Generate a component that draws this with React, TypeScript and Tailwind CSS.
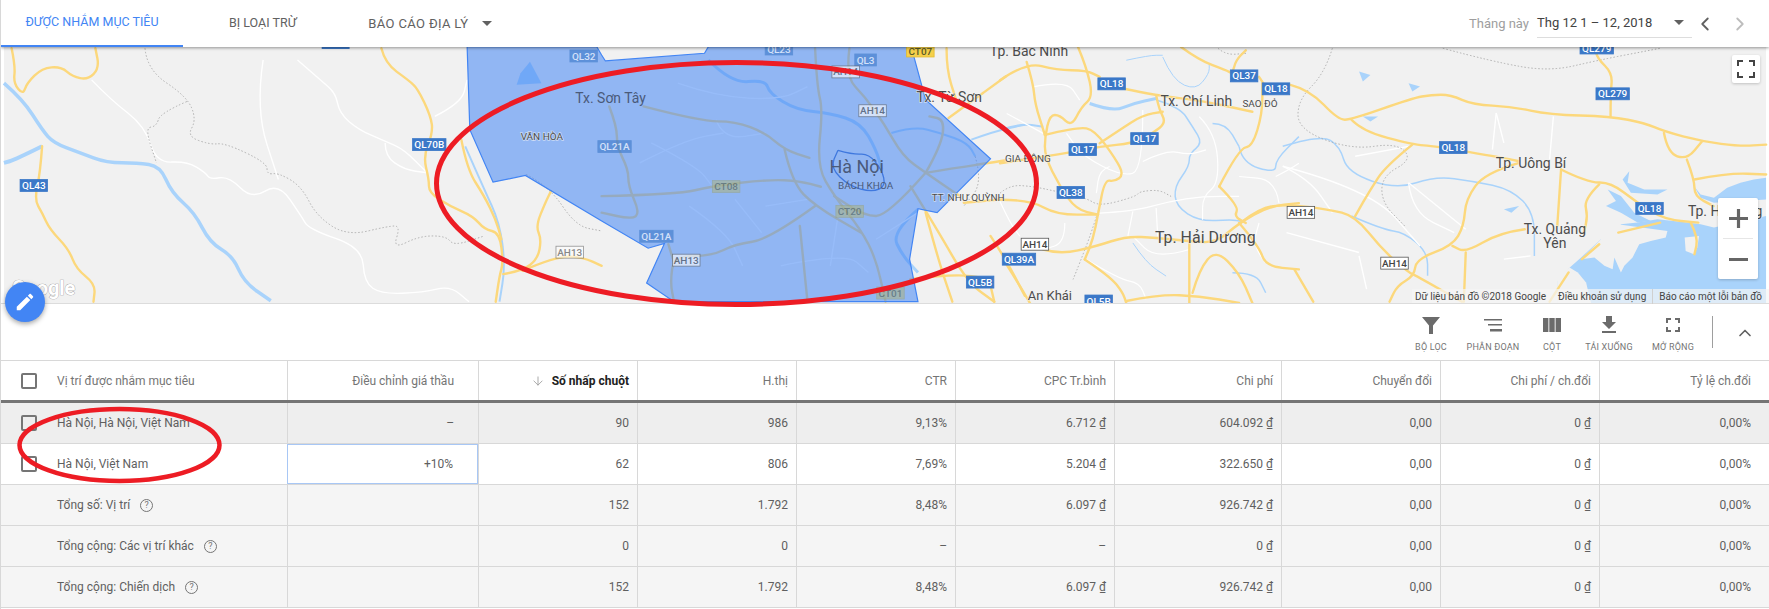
import { ArrowDown, ChevronLeft, ChevronRight, ChevronUp } from 'lucide-react'

// the map traces are read off crops of the map, so each crop has its own offset and scale
const parse = (ox: number, oy: number, sx: number, sy: number, raw: string) =>
    raw.trim().split(/\s+/).map((s) => {
        const [x, y] = s.split(',').map(Number)
        return [x / sx + ox, y / sy + oy]
    })

const curve = (p: number[][]) => {
    let d = `M${p[0][0].toFixed(1)} ${p[0][1].toFixed(1)}`
    for (let i = 1; i < p.length - 1; i++) {
        const mx = (p[i][0] + p[i + 1][0]) / 2
        const my = (p[i][1] + p[i + 1][1]) / 2
        d += `Q${p[i][0].toFixed(1)} ${p[i][1].toFixed(1)} ${mx.toFixed(1)} ${my.toFixed(1)}`
    }
    const l = p[p.length - 1]
    return d + `L${l[0].toFixed(1)} ${l[1].toFixed(1)}`
}

const smooth = (off: number, raw: string) => curve(parse(off, 0, 2.613, 3, raw))
const middle = (raw: string) => curve(parse(1000, 47, 3, 3, raw))
const join = (p: number[][]) => p.map(([x, y]) => `${x.toFixed(1)},${y.toFixed(1)}`).join(' ')
const poly = (off: number, raw: string) => join(parse(off, 0, 2.613, 3, raw))
const bay = (raw: string) => join(parse(1560, 170, 3, 3, raw))

const yellow: [number, string][] = [
    [0, '20,145 30,200 25,250 50,285 60,250 100,205 150,200 180,230 220,240 250,205 240,145'],
    [0, '100,440 95,520 80,600 100,640 120,690 170,750 190,810 240,855 235,908'],
    [0, '990,145 1000,190 1060,240 1085,265 1120,350 1125,400 1100,470 1115,540 1115,580 1170,620 1230,650 1260,690 1300,700 1310,790 1300,830 1290,908'],
    [0, '1310,825 1360,815 1400,780 1410,720 1395,680 1420,610 1435,575'],
    [0, '1200,420 1215,510 1260,590 1290,660 1305,720'],
    [0, '1360,815 1450,770 1520,775 1568,800'],
    [600, '560,145 565,260 580,330 565,500 610,590 680,690 720,780 745,908'],
    [600, '650,145 640,230 690,290 740,370 790,470 850,520 940,590'],
    [600, '110,320 260,365 350,365 430,400 480,450 545,475'],
    [600, '480,450 500,550 560,620 680,700'],
    [600, '0,590 200,585 290,560 440,540 520,545 575,562'],
    [600, '20,320 40,380 40,440 70,510 70,560 100,640 80,660 0,640'],
    [600, '850,520 750,650 690,650 610,590'],
    [600, '850,520 890,440 900,360 860,350'],
    [600, '560,620 440,720 350,735 290,770 190,770 180,850 190,908'],
    [600, '175,735 190,790'],
    [600, '520,680 530,790 540,908'],
    [600, '850,520 930,505 1020,490 1060,482'],
    [600, '810,560 880,690 960,850 1030,908'],
    [600, '850,640 880,770 920,908'],
    [600, '950,610 1050,600'],
    [600, '1020,710 1060,780 1110,890'],
    [600, '810,840 1010,810 1030,908'],
    [600, '905,145 905,210 930,300'],
    [600, '1000,280 1060,230'],
    [600, '910,355 1000,280'],
    [1169, '320,255 370,270 445,360 480,360 640,295 690,285 740,285 800,315 900,320 1000,345 1160,350 1250,370 1300,395 1400,425 1500,440 1568,435'],
    [1169, '480,360 510,395 640,435 700,440 880,475 920,485'],
    [1169, '640,435 570,500 530,570 490,650'],
    [1169, '190,670 240,625 310,615 420,630 490,650 560,750 630,820 650,830 770,908'],
    [1169, '920,490 830,520 780,600 775,680 745,740 650,780 645,830 600,860 580,908'],
    [1169, '1030,510 1020,680'],
    [1169, '1030,510 1100,550 1160,548 1230,610 1300,660 1390,670'],
    [1169, '1130,555 1090,600 1100,650 1090,700'],
    [1169, '935,690 870,700 780,760 745,740'],
    [1169, '780,760 775,908'],
    [1169, '1160,350 1160,280 1165,220 1125,175 1120,145'],
    [1169, '1300,400 1310,460 1360,480 1400,425'],
    [1169, '1360,480 1380,540 1380,590 1430,620'],
    [1169, '1380,540 1470,520 1568,525'],
    [1169, '1370,670 1390,715 1380,765'],
    [1169, '330,810 380,908'],
    [1169, '1000,908 1050,820'],
    [1169, '1085,780 1130,735'],
    [1169, '1180,700 1290,670'],
]

const yellowMiddle = [
    '235,0 260,60 280,150 245,180 215,240 180,205 150,205 135,270 135,330 180,420 230,490 295,505',
    '0,100 80,45 170,70 260,70 300,90',
    '80,45 100,110 105,170 135,265',
    '135,265 235,240 285,250 350,340 372,385 345,405 315,400 295,505 280,580 255,640',
    '0,350 130,330 210,318 300,300 400,290 460,260 500,228 480,190 470,145',
    '300,290 360,250 430,205 490,195',
    '370,125 480,148 600,160 760,195',
    '0,460 90,460 170,505 295,505',
    '130,610 180,625 290,600 380,570 470,575 570,585 650,590 720,530 810,480 900,470',
    '255,640 330,690 370,740 380,771',
    '10,640 60,720 90,771',
    '380,765 480,745 600,750 720,771',
    '570,585 570,771',
    '580,740 600,670 650,610 720,680 760,771',
    '660,420 720,305 760,300 790,200 790,110',
    '660,420 720,480 705,510 740,530',
    '720,530 780,600 800,660 900,670',
    '545,0 600,40 680,70 700,80 710,40 740,10',
    '780,90 800,120',
]

const white: [number, string][] = [
    [0, '230,240 280,300 370,380 400,490 480,485 530,520 540,540 590,530 650,600 720,550 780,650 800,690 940,745 945,850 990,885 1100,880 1170,860 1220,908'],
    [0, '770,180 830,240 870,280 880,340 930,390 1000,425 1050,450 1110,520'],
    [0, '680,180 660,330 720,540'],
    [0, '1000,430 1000,470 1050,510 1110,520'],
    [0, '1130,350 1200,310 1215,240'],
    [600, '200,250 300,290 470,300 540,260'],
    [600, '300,360 320,420 430,400'],
    [600, '130,430 250,500 290,560'],
    [600, '350,600 420,700'],
    [600, '620,650 600,800'],
    [600, '230,620 330,700 370,800'],
    [600, '430,620 540,600'],
    [600, '100,490 220,420 320,400'],
    [600, '720,720 830,640'],
    [600, '470,800 640,760 700,820'],
    [1169, '300,500 530,570 660,740'],
    [1169, '630,550 780,690'],
    [1169, '860,340 850,450'],
    [1169, '1010,350 1000,480'],
    [1169, '490,470 630,440'],
    [1169, '300,500 370,540 430,640'],
    [1169, '630,550 640,640 750,700'],
    [1169, '860,340 880,430'],
    [1169, '310,700 500,760'],
    [1169, '500,770 520,870'],
    [1169, '880,780 950,770'],
]

const whiteMiddle = [
    '100,120 200,100 240,160',
    '130,260 20,200',
    '430,190 430,370 370,390 250,330 200,260',
    '430,345 500,310 570,325 620,310',
    '330,360 300,370 290,440',
    '0,465 30,530 60,570',
    '300,500 400,495 510,465 610,450 720,450',
    '400,495 385,570',
    '470,485 475,570',
    '570,610 470,640 400,570',
    '260,640 360,700 420,710 440,760',
    '600,210 650,260 660,410 610,450 610,520',
    '195,530 195,590 130,610',
    '830,390 870,370 900,350',
    '840,470 830,400 720,390',
    '800,650 760,600 780,530',
]

const water: [number, string, number][] = [
    [0, '0,250 50,300 100,390 130,430 200,460 270,490 350,490 410,500 440,580 500,640 540,730 600,770 630,850 700,905', 3.5],
    [0, '100,440 30,480 0,490', 4],
    [0, '1210,440 1260,570 1300,670 1315,800 1300,908', 2],
    [600, '280,180 340,250 430,240 440,280 510,330 600,340 680,370 720,450 735,510', 3],
    [600, '830,630 760,700 790,770 830,820', 3],
    [600, '760,400 820,380 890,400 960,430 980,470', 2],
    [600, '970,420 1030,395 1110,375', 2],
    [1169, '300,440 400,405 450,440 470,520 600,570 700,530 800,545 900,570 960,640 960,770', 1.5],
    [1169, '480,650 560,690 620,700 680,760 680,830', 1.5],
]

const waterMiddle: [string, number][] = [
    ['270,170 340,195 400,170 470,155', 3],
    ['470,160 540,180 580,240 610,290 570,320 570,360 525,420 530,480 600,525 700,520 725,525', 1.5],
    ['720,300 730,350 830,380 830,340 900,270', 1.5],
    ['640,230 680,230 720,300', 1.5],
    ['490,30 520,100 590,130 630,80 630,50', 1],
    ['380,40 450,25 490,25', 1],
    ['0,250 60,230 130,240', 2],
    ['700,680 770,680 800,740', 1.5],
    ['400,590 440,650 500,690', 1],
]

const seas: [number, string][] = [
    [1169, '500,215 530,225 510,245'],
    [1169, '630,250 660,260 640,275'],
    [1169, '510,350 550,350 530,365'],
    [1169, '880,630 920,620 900,640'],
    [0, '1355,220 1380,185 1410,250 1345,255'],
]

const bayWater = [
    '0,402 0,335 30,300 70,265 130,210 175,205 190,165 240,160 300,150 390,160 430,165 470,175 627,140 627,402',
    '150,60 190,80 230,130 280,155 240,160 190,130 145,110 175,95',
    '195,30 215,5 210,40 260,60 330,60 300,75 220,70',
    '410,50 430,75 470,85 510,55 550,40 590,30 627,25 627,90 470,100 430,85',
]

const bayLand = [
    '0,320 35,295 60,310 85,340 100,402 0,402',
    '130,210 180,165 330,185 325,205 280,215 245,225 225,265 200,290 190,310 170,265 165,300 140,290 110,265 70,270',
    '382,205 425,200 420,235 410,255 385,245',
]

const borders: [number, string][] = [
    [0, '370,145 375,210 480,290 505,360 480,410 540,435 580,430 690,490 690,525 720,520 780,560 820,650 900,710 1010,680 1040,680 1020,750 1090,710 1160,710 1180,740 1260,710'],
    [0, '480,305 410,340 400,380 370,385 400,490'],
    [0, '1370,525 1430,560 1500,680 1568,695'],
    [600, '980,470 1000,550 950,620'],
    [1169, '130,145 150,165 205,160'],
    [1169, '430,145 410,220 340,300 340,390 480,450 600,430 640,480 560,530 560,610 620,680'],
    [1169, '720,145 850,185 1000,215 1130,180 1290,145'],
]

const bordersMiddle = [
    '0,440 30,415 100,420 170,435 260,455 300,480 410,450 420,435 480,430 515,450',
    '300,480 275,560 240,650 220,700',
]

const shields: [number, number, string, string][] = [
    [427, 145, 'QL70B', 'blue'],
    [30, 186, 'QL43', 'blue'],
    [582, 56, 'QL32', 'blue'],
    [613, 147, 'QL21A', 'blue'],
    [655, 237, 'QL21A', 'blue'],
    [778, 49, 'QL23', 'blue'],
    [865, 60, 'QL3', 'blue'],
    [1112, 84, 'QL18', 'blue'],
    [1083, 150, 'QL17', 'blue'],
    [1145, 139, 'QL17', 'blue'],
    [1071, 193, 'QL38', 'blue'],
    [1019, 260, 'QL39A', 'blue'],
    [980, 283, 'QL5B', 'blue'],
    [1099, 302, 'QL5B', 'blue'],
    [1245, 76, 'QL37', 'blue'],
    [1277, 89, 'QL18', 'blue'],
    [1455, 148, 'QL18', 'blue'],
    [1599, 48, 'QL279', 'blue'],
    [1615, 94, 'QL279', 'blue'],
    [1652, 209, 'QL18', 'blue'],
    [872, 111, 'AH14', 'white'],
    [845, 72, 'AH14', 'white'],
    [685, 261, 'AH13', 'white'],
    [568, 253, 'AH13', 'white'],
    [1035, 245, 'AH14', 'white'],
    [1302, 213, 'AH14', 'white'],
    [1396, 264, 'AH14', 'white'],
    [920, 51, 'CT07', 'yellow'],
    [725, 187, 'CT08', 'green'],
    [849, 212, 'CT20', 'green'],
    [890, 294, 'CT01', 'green'],
]

const places: [number, number, string, number][] = [
    [1029, 51, 'Tp. Bắc Ninh', 14],
    [949, 97, 'Tx. Từ Sơn', 14],
    [609, 98, 'Tx. Sơn Tây', 14],
    [540, 137, 'VĂN HÒA', 10],
    [856, 167, 'Hà Nội', 18],
    [865, 186, 'BÁCH KHOA', 10],
    [1028, 159, 'GIA ĐÔNG', 10],
    [968, 198, 'TT. NHƯ QUỲNH', 10],
    [1197, 101, 'Tx. Chí Linh', 14],
    [1261, 104, 'SAO ĐỎ', 10],
    [1533, 163, 'Tp. Uông Bí', 14],
    [1206, 238, 'Tp. Hải Dương', 16],
    [1557, 230, 'Tx. Quảng', 14],
    [1557, 244, 'Yên', 14],
    [1050, 296, 'An Khái', 13],
    [1728, 212, 'Tp. Hạ Long', 14],
]

const shieldStyle: Record<string, [string, string, string]> = {
    blue: ['#3b78c8', '#3b78c8', '#ffffff'],
    white: ['#ffffff', '#555555', '#444444'],
    yellow: ['#f5d04a', '#e4bb2c', '#5a5a28'],
    green: ['#a9b48a', '#98a37c', '#4d5a45'],
}

function MapDrawing() {
    return (
        <svg viewBox="0 47 1769 257" className="block w-full h-full font-[Roboto,sans-serif]">
            <rect x="0" y="47" width="1769" height="257" fill="#f1f1f1" />
            {bayWater.map((s, i) => <polygon key={i} points={bay(s)} fill="#a9d3fb" />)}
            {bayLand.map((s, i) => <polygon key={i} points={bay(s)} fill="#f1f1f1" />)}
            {seas.map(([o, s], i) => <polygon key={i} points={poly(o, s)} fill="#a9d3fb" />)}
            {water.map(([o, s, w], i) => <path key={i} d={smooth(o, s)} fill="none" stroke="#a9d3fb" strokeWidth={w} strokeLinejoin="round" />)}
            {waterMiddle.map(([s, w], i) => <path key={i} d={middle(s)} fill="none" stroke="#a9d3fb" strokeWidth={w} />)}
            {white.map(([o, s], i) => <path key={i} d={smooth(o, s)} fill="none" stroke="#ffffff" strokeWidth="1.4" />)}
            {whiteMiddle.map((s, i) => <path key={i} d={middle(s)} fill="none" stroke="#ffffff" strokeWidth="1.2" />)}
            {borders.map(([o, s], i) => <path key={i} d={smooth(o, s)} fill="none" stroke="#a8a8a8" strokeWidth="0.9" strokeDasharray="1.5 2" />)}
            {bordersMiddle.map((s, i) => <path key={i} d={middle(s)} fill="none" stroke="#a8a8a8" strokeWidth="0.9" strokeDasharray="1.5 2" />)}
            {yellow.map(([o, s], i) => <path key={i} d={smooth(o, s)} fill="none" stroke="#fcd87c" strokeWidth="2.4" strokeLinejoin="round" strokeLinecap="round" />)}
            {yellowMiddle.map((s, i) => <path key={i} d={middle(s)} fill="none" stroke="#fcd87c" strokeWidth="2.4" strokeLinejoin="round" strokeLinecap="round" />)}
            <rect x="319" y="47" width="28" height="2" fill="#3b78c8" />
            <polygon
                points={[
                    poly(0, '1215,140 1222,390 1283,548 1368,528 1568,665'),
                    poly(600, '122,747 165,733 118,852 190,908 830,908 808,780 830,628 880,640 1020,478 850,300 812,140 280,140 270,160 10,183 0,165'),
                    poly(0, '1555,140'),
                ].join(' ')}
                fill="#4285f4"
                fillOpacity="0.55"
                stroke="#4285f4"
                strokeWidth="1.2"
            />
            <path d={smooth(600, '620,452 660,465 700,462 735,510 745,560 710,578 650,560 600,505 620,452')} fill="none" stroke="#3f78de" strokeWidth="1.3" />
            {shields.map(([x, y, t, k], i) => {
                const [bg, line, ink] = shieldStyle[k]
                const w = t.length * 5.9 + 4
                const over = x > 430 && x < 900 && y < 300
                return (
                    <g key={i} opacity={over ? 0.6 : 1}>
                        <rect x={x - w / 2} y={y - 6} width={w} height="12" fill={bg} stroke={line} strokeWidth="0.8" />
                        <text x={x} y={y + 3.6} textAnchor="middle" fontSize="10" fontWeight="500" fill={ink}>{t}</text>
                    </g>
                )
            })}
            {places.map(([x, y, t, s], i) => {
                const inside = x > 560 && x < 900
                return (
                    <text key={i} x={x} y={y + s * 0.36} textAnchor="middle" fontSize={s} fill={inside ? '#4a5a7a' : '#4c4c4c'} stroke="#f4f4f4" strokeOpacity={inside ? 0 : 0.6} strokeWidth="1.5" paintOrder="stroke">{t}</text>
                )
            })}
            <text x="8" y="296" fontSize="20" fontWeight="700" fill="#ffffff" stroke="#9a9a9a" strokeWidth="0.7" paintOrder="stroke">Google</text>
        </svg>
    )
}

const Caret = () => (
    <span className="inline-block w-0 h-0 border-x-[5px] border-x-transparent border-t-[5px] border-t-[#616161]" />
)

const HelpIcon = () => (
    <span className="ml-[10px] inline-flex items-center justify-center w-[13px] h-[13px] rounded-full border border-[#757575] text-[9px] leading-none text-[#757575]">?</span>
)

const Check = () => (
    <span className="block w-4 h-4 rounded-[2px] border-2 border-[#757575] bg-transparent" />
)

const tools = [
    { label: 'BỘ LỌC', w: 'w-[62px]', d: 'M3 4h18l-7 8.5V21h-4v-8.5L3 4z' },
    { label: 'PHÂN ĐOẠN', w: 'w-[62px]', d: 'M3 6h18v1.4H3zM7 11h14v1.4H7zM9 16h12v2.4H9z' },
    { label: 'CỘT', w: 'w-[56px]', d: 'M3 5h5.4v14H3zM9.3 5h5.4v14H9.3zM15.6 5H21v14h-5.4z' },
    { label: 'TẢI XUỐNG', w: 'w-[58px]', d: 'M19 9h-4V3H9v6H5l7 7 7-7zM5 18v2h14v-2H5z' },
    { label: 'MỞ RỘNG', w: 'w-[70px]', d: 'M7 14H5v5h5v-2H7v-3zm-2-4h2V7h3V5H5v5zm12 7h-3v2h5v-5h-2v3zM14 5v2h3v3h2V5h-5z' },
]

const columns = ['Điều chỉnh giá thầu', 'Số nhấp chuột', 'H.thị', 'CTR', 'CPC Tr.bình', 'Chi phí', 'Chuyển đổi', 'Chi phí / ch.đổi', 'Tỷ lệ ch.đổi']

const rows = [
    { name: 'Hà Nội, Hà Nội, Việt Nam', check: true, help: false, bg: 'bg-[#eeeeee]', cells: ['–', '90', '986', '9,13%', '6.712 ₫', '604.092 ₫', '0,00', '0 ₫', '0,00%'] },
    { name: 'Hà Nội, Việt Nam', check: true, help: false, bg: 'bg-white', cells: ['+10%', '62', '806', '7,69%', '5.204 ₫', '322.650 ₫', '0,00', '0 ₫', '0,00%'] },
    { name: 'Tổng số: Vị trí', check: false, help: true, bg: 'bg-[#f5f5f5]', cells: ['', '152', '1.792', '8,48%', '6.097 ₫', '926.742 ₫', '0,00', '0 ₫', '0,00%'] },
    { name: 'Tổng cộng: Các vị trí khác', check: false, help: true, bg: 'bg-[#f5f5f5]', cells: ['', '0', '0', '–', '–', '0 ₫', '0,00', '0 ₫', '0,00%'] },
    { name: 'Tổng cộng: Chiến dịch', check: false, help: true, bg: 'bg-[#f5f5f5]', cells: ['', '152', '1.792', '8,48%', '6.097 ₫', '926.742 ₫', '0,00', '0 ₫', '0,00%'] },
]

const gridCols = 'grid grid-cols-[286px_191px_159px_159px_159px_159px_167px_159px_159px_170px]'

export default function App() {
    return (
        <div className="relative w-[1769px] h-[609px] overflow-hidden bg-white border-l border-[#d8d8d8] font-[Roboto,sans-serif] text-[12px] text-[#5f5f5f]">
            <div className="relative z-10 flex items-center h-[47px] bg-white text-[12.5px] text-[#616161] shadow-[0_1px_3px_rgba(0,0,0,0.4)]">
                <div className="flex items-center justify-center w-[182px] h-full border-b-[2px] border-[#4285f4] text-[#4285f4]">ĐƯỢC NHẮM MỤC TIÊU</div>
                <div className="ml-[46px]">BỊ LOẠI TRỪ</div>
                <div className="ml-[72px] flex items-center gap-[14px] text-[13px] tracking-[0.35px]">BÁO CÁO ĐỊA LÝ <Caret /></div>
                <div className="ml-auto flex items-center h-full text-[13px]">
                    <span className="text-[#9e9e9e]">Tháng này</span>
                    <div className="ml-[8px] flex items-center justify-between w-[155px] h-[37px] mb-[9px] pt-[8px] pr-[8px] border-b border-[#dddddd] text-[#424242]">
                        Thg 12 1 – 12, 2018 <Caret />
                    </div>
                    <ChevronLeft className="ml-[2px] w-[22px] h-[22px] text-[#616161]" strokeWidth={2} />
                    <ChevronRight className="ml-[13px] mr-[18px] w-[22px] h-[22px] text-[#bdbdbd]" strokeWidth={2} />
                </div>
            </div>

            <div className="relative h-[257px] border-b border-[#dcdcdc]">
                <MapDrawing />
                <div className="absolute left-[1731px] top-[8px] flex items-center justify-center w-[28px] h-[28px] rounded-[2px] bg-white shadow-[0_1px_3px_rgba(0,0,0,0.2)]">
                    <svg viewBox="0 0 18 18" className="w-[18px] h-[18px]" fill="#444444"><path d="M0 0h6v2H2v4H0zM12 0h6v6h-2V2h-4zM0 12h2v4h4v2H0zM16 12h2v6h-6v-2h4z" /></svg>
                </div>
                <div className="absolute left-[1717px] top-[151px] flex flex-col items-center w-[40px] h-[81px] rounded-[2px] bg-white shadow-[0_1px_3px_rgba(0,0,0,0.2)]">
                    <div className="flex items-center justify-center h-[40px] w-full">
                        <svg viewBox="0 0 18 18" className="w-[19px] h-[19px]" fill="#666666"><path d="M7.5 0h3v7.5H18v3h-7.5V18h-3v-7.5H0v-3h7.5z" /></svg>
                    </div>
                    <div className="w-[30px] h-px bg-[#e6e6e6]" />
                    <div className="flex items-center justify-center h-[40px] w-full">
                        <div className="w-[19px] h-[3px] bg-[#666666]" />
                    </div>
                </div>
                <div className="absolute right-0 bottom-0 flex items-center h-[14px] pl-[3px] pr-[7px] bg-[#f5f5f5]/70 text-[10px] text-[#444444]">
                    <span>Dữ liệu bản đồ ©2018 Google</span>
                    <span className="ml-[12px]">Điều khoản sử dụng</span>
                    <span className="ml-[6px] pl-[6px] border-l border-[#d0d0d0]">Báo cáo một lỗi bản đồ</span>
                </div>
            </div>

            <div className="absolute z-20 left-[4px] top-[282px] flex items-center justify-center w-[40px] h-[40px] rounded-full bg-[#4285f4] shadow-[0_2px_5px_rgba(0,0,0,0.35)]">
                <svg viewBox="0 0 24 24" className="w-[22px] h-[22px]" fill="#ffffff"><path d="M3 17.25V21h3.75L17.81 9.94l-3.75-3.75L3 17.25zM20.71 7.04c.39-.39.39-1.02 0-1.41l-2.34-2.34c-.39-.39-1.02-.39-1.41 0l-1.83 1.83 3.75 3.75 1.83-1.83z" /></svg>
            </div>

            <div className="flex items-start justify-end h-[56px] pr-[14px]">
                {tools.map((t) => (
                    <div key={t.label} className={`flex flex-col items-center pt-[9px] text-[9px] tracking-[0.2px] leading-none text-[#757575] ${t.w}`}>
                        <svg viewBox="0 0 24 24" className="w-[24px] h-[24px] mb-[6px]" fill="#6b6b6b"><path d={t.d} /></svg>
                        {t.label}
                    </div>
                ))}
                <div className="ml-[4px] mt-[12px] w-px h-[32px] bg-[#9e9e9e]" />
                <ChevronUp className="ml-[22px] mt-[19px] w-[20px] h-[20px] text-[#616161]" strokeWidth={2} />
            </div>

            <div className={`${gridCols} h-[43px] border-t border-b-[3px] border-t-[#d8d8d8] border-b-[#757575] text-[#757575]`}>
                <div className="flex items-center pl-[20px]">
                    <Check />
                    <span className="ml-[20px]">Vị trí được nhắm mục tiêu</span>
                </div>
                {columns.map((c, i) => (
                    <div key={c} className={`flex items-center justify-end border-l border-[#d8d8d8] ${i === 0 ? 'pr-[24px]' : i === 8 ? 'pr-[18px]' : 'pr-[8px]'} ${i === 1 ? 'font-bold text-[#212121]' : ''}`}>
                        {i === 1 && <ArrowDown className="mr-[7px] w-[14px] h-[14px] text-[#9e9e9e]" strokeWidth={1.5} />}
                        {c}
                    </div>
                ))}
            </div>

            {rows.map((r) => (
                <div key={r.name} className={`${gridCols} h-[41px] border-b border-[#d8d8d8] ${r.bg}`}>
                    <div className="flex items-center pl-[20px]">
                        {r.check ? <Check /> : <span className="w-4" />}
                        <span className="ml-[20px]">{r.name}</span>
                        {r.help && <HelpIcon />}
                    </div>
                    {r.cells.map((c, i) => (
                        <div key={i} className={`flex items-center justify-end ${i === 0 ? 'pr-[24px]' : i === 8 ? 'pr-[18px]' : 'pr-[8px]'} ${c === '+10%' ? 'border border-[#a8c7f5]' : 'border-l border-[#d8d8d8]'}`}>
                            {c}
                        </div>
                    ))}
                </div>
            ))}

            <svg viewBox="0 0 1769 609" className="absolute left-0 top-0 z-30 w-[1769px] h-[609px] pointer-events-none" fill="none" stroke="#ed1c24">
                <ellipse cx="735.5" cy="183.5" rx="300" ry="121" strokeWidth="5" />
                <ellipse cx="118.5" cy="445" rx="100" ry="36" strokeWidth="4.5" />
            </svg>
        </div>
    )
}
